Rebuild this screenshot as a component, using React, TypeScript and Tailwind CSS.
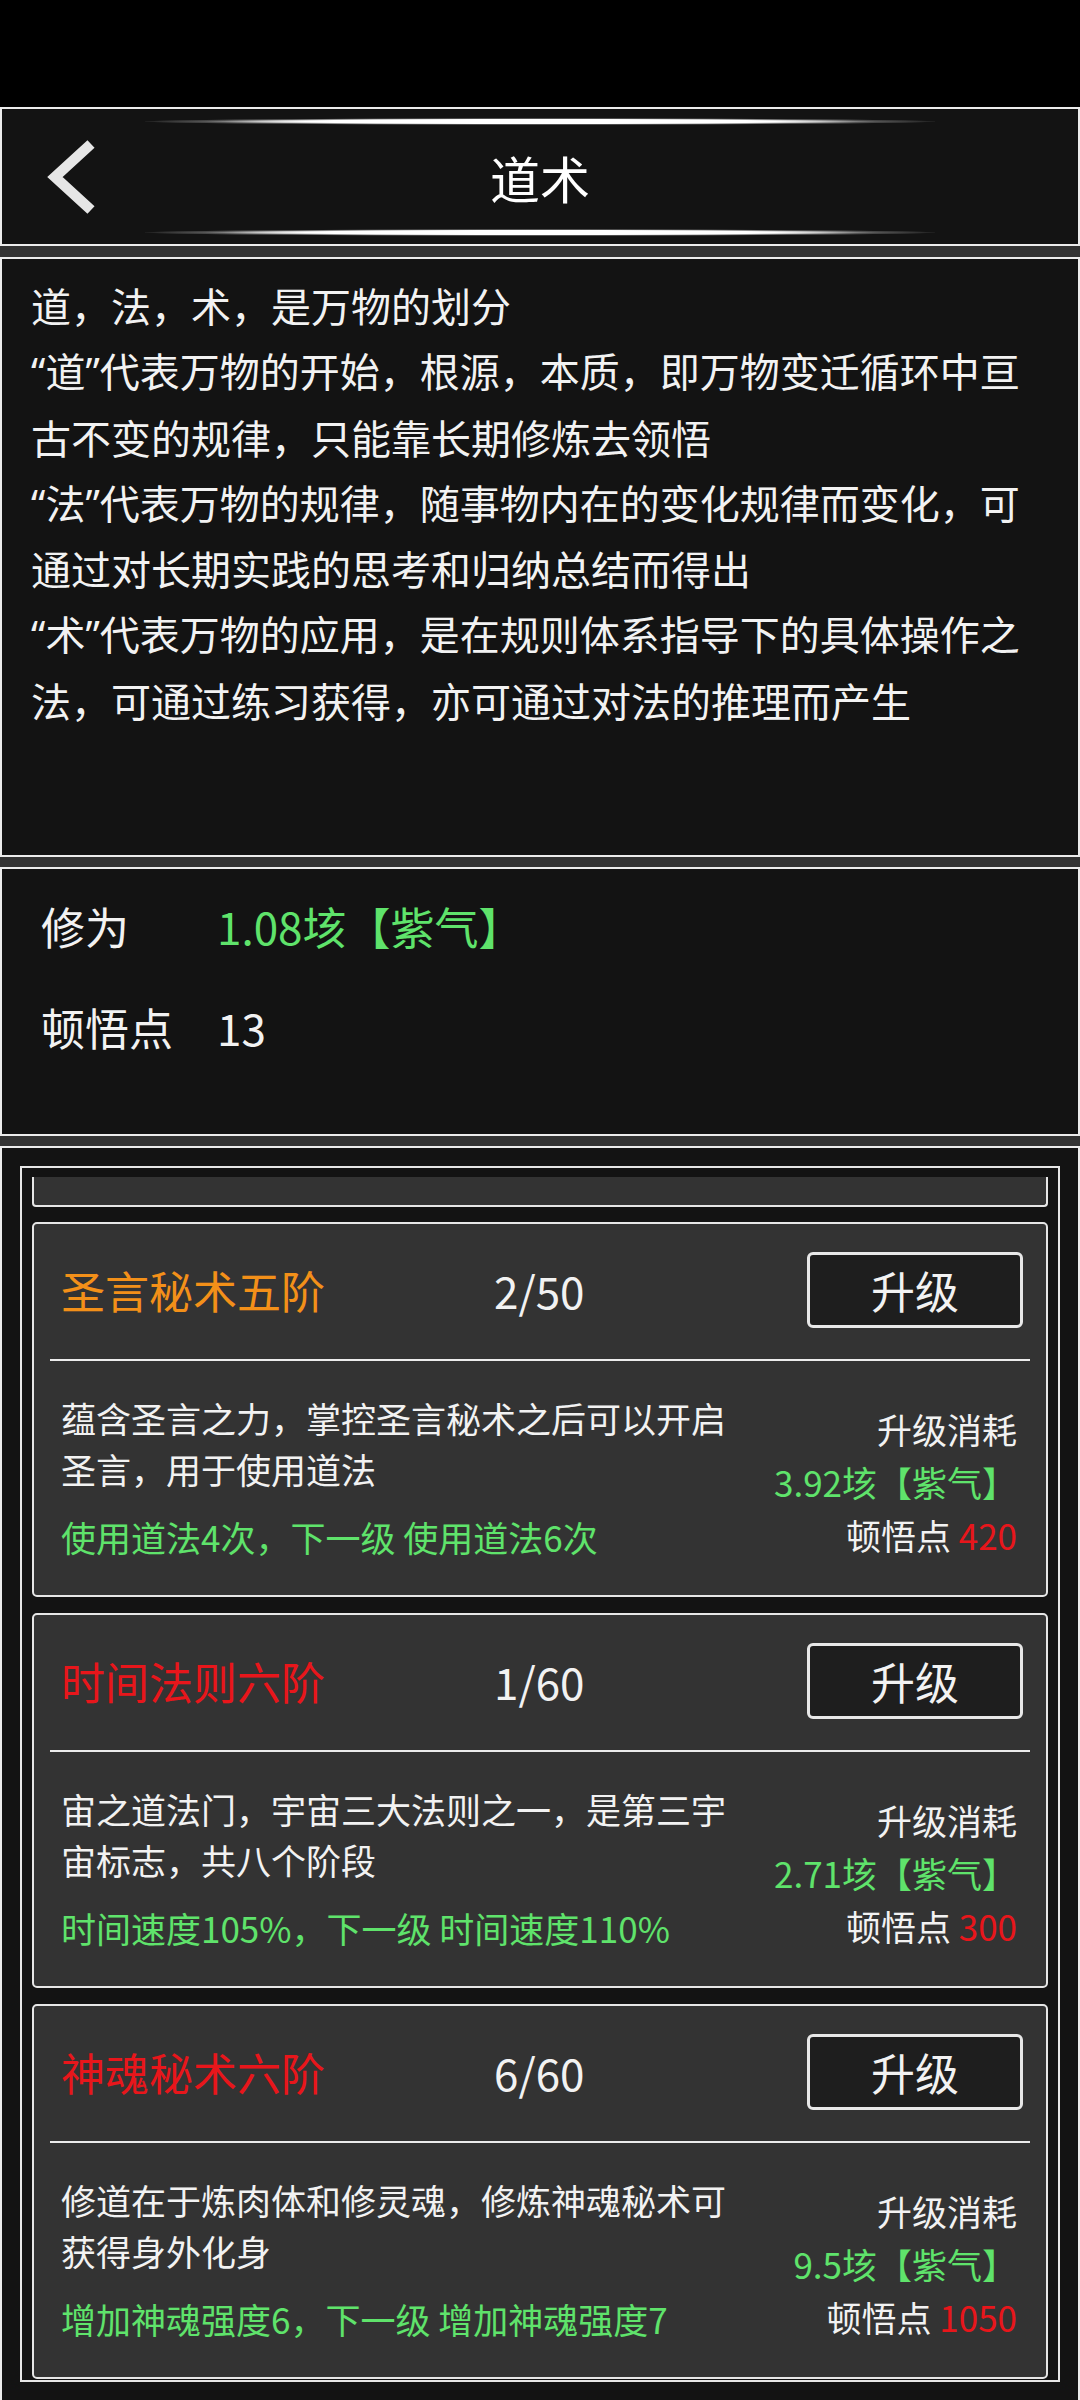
import React from "react";

const Q = ({ c }: { c: string }) => (
  <span className="font-['Noto_Sans',sans-serif]">{c}</span>
);

function Chevron() {
  return (
    <svg width="60" height="84" viewBox="0 0 60 84" className="ml-[40px] block">
      <polyline
        points="49,9 13,42 49,75"
        fill="none"
        stroke="#e6e6e6"
        strokeWidth="10.5"
        strokeLinecap="butt"
        strokeLinejoin="miter"
      />
    </svg>
  );
}

function GlowLine() {
  return (
    <div className="mx-auto w-[790px] h-[7px] bg-[radial-gradient(ellipse_at_center,#ffffff_0%,#ffffff_42%,rgba(220,220,220,0.9)_50%,rgba(120,120,120,0.65)_60%,rgba(80,80,80,0.45)_68%,transparent_72%)]" />
  );
}

function Header() {
  return (
    <div className="h-[139px] border-2 border-[#ececec] bg-[#131313] flex flex-col pt-[9px]">
      <GlowLine />
      <div className="h-[104px] grid grid-cols-[1fr_auto_1fr] items-center">
        <div className="flex items-center">
          <Chevron />
        </div>
        <div className="text-[50px] leading-none text-white">道术</div>
        <div />
      </div>
      <GlowLine />
    </div>
  );
}

function Intro() {
  return (
    <div className="h-[600px] border-2 border-[#ececec] bg-[#131313] pl-[29px] pt-[14px]">
      <div className="text-[40px] leading-[65.3px] text-[#f2f2f2] whitespace-nowrap">
        <div>道，法，术，是万物的划分</div>
        <div>
          <Q c="“" />道<Q c="”" />代表万物的开始，根源，本质，即万物变迁循环中亘
        </div>
        <div>古不变的规律，只能靠长期修炼去领悟</div>
        <div>
          <Q c="“" />法<Q c="”" />代表万物的规律，随事物内在的变化规律而变化，可
        </div>
        <div>通过对长期实践的思考和归纳总结而得出</div>
        <div>
          <Q c="“" />术<Q c="”" />代表万物的应用，是在规则体系指导下的具体操作之
        </div>
        <div>法，可通过练习获得，亦可通过对法的推理而产生</div>
      </div>
    </div>
  );
}

function Stats() {
  return (
    <div className="h-[269px] border-2 border-[#ececec] bg-[#131313] pt-[27px] pl-[39px] flex flex-col gap-[41px] text-[44px] leading-[60px]">
      <div className="flex">
        <div className="w-[176px] text-[#f2f2f2]">修为</div>
        <div className="text-[#5fe36b]">1.08垓【紫气】</div>
      </div>
      <div className="flex">
        <div className="w-[176px] text-[#f2f2f2]">顿悟点</div>
        <div className="text-[#f2f2f2]">13</div>
      </div>
    </div>
  );
}

type Item = {
  name: string;
  color: string;
  count: string;
  desc: string[];
  effect: string;
  cost: string;
  points: string;
};

const items: Item[] = [
  {
    name: "圣言秘术五阶",
    color: "text-[#f39019]",
    count: "2/50",
    desc: ["蕴含圣言之力，掌控圣言秘术之后可以开启", "圣言，用于使用道法"],
    effect: "使用道法4次，下一级 使用道法6次",
    cost: "3.92垓【紫气】",
    points: "420",
  },
  {
    name: "时间法则六阶",
    color: "text-[#e8161b]",
    count: "1/60",
    desc: ["宙之道法门，宇宙三大法则之一，是第三宇", "宙标志，共八个阶段"],
    effect: "时间速度105%，下一级 时间速度110%",
    cost: "2.71垓【紫气】",
    points: "300",
  },
  {
    name: "神魂秘术六阶",
    color: "text-[#e8161b]",
    count: "6/60",
    desc: ["修道在于炼肉体和修灵魂，修炼神魂秘术可", "获得身外化身"],
    effect: "增加神魂强度6，下一级 增加神魂强度7",
    cost: "9.5垓【紫气】",
    points: "1050",
  },
];

function Card({ it }: { it: Item }) {
  return (
    <div className="h-[375px] shrink-0 border-2 border-[#e6e6e6] rounded-[5px] bg-[#333333] flex flex-col">
      <div className="flex items-center pt-[28px] pl-[27px]">
        <div className={`w-[433px] text-[44px] leading-none ${it.color}`}>{it.name}</div>
        <div className="w-[313px] text-[44px] leading-none text-[#f2f2f2]">{it.count}</div>
        <div className="w-[216px] h-[76px] border-[3px] border-[#e8e8e8] rounded-[6px] bg-[#1e1e1e] flex items-center justify-center text-[44px] leading-none text-[#f2f2f2]">
          升级
        </div>
      </div>
      <div className="mt-[31px] mx-[16px] h-[2px] bg-[#ececec]" />
      <div className="flex justify-between">
        <div className="pl-[27px] pt-[31px] w-[707px]">
          <div className="text-[35px] leading-[51px] text-[#f2f2f2] whitespace-nowrap">
            {it.desc.map((l) => (
              <div key={l}>{l}</div>
            ))}
          </div>
          <div className="mt-[17px] text-[35px] leading-[51px] text-[#5fe36b] whitespace-nowrap">{it.effect}</div>
        </div>
        <div className="pt-[41px] pr-[29px] text-right text-[35px] leading-[53px] shrink-0">
          <div className="text-[#f2f2f2]">升级消耗</div>
          <div className="text-[#5fe36b]">{it.cost}</div>
          <div className="text-[#f2f2f2]">
            顿悟点 <span className="text-[#e8161b]">{it.points}</span>
          </div>
        </div>
      </div>
    </div>
  );
}

function List() {
  return (
    <div className="h-[1254px] border-x-2 border-t-2 border-[#ececec] bg-[#131313] pt-[18px] px-[18px]">
      <div className="h-[1216px] border-2 border-[#e6e6e6] overflow-hidden pt-[9px] px-[10px] flex flex-col">
        <div className="h-[30px] shrink-0 bg-[#333333] border-x-2 border-b-2 border-[#e6e6e6] rounded-b-[4px]" />
        <div className="h-[15px] shrink-0" />
        <div className="flex flex-col gap-[16px]">
          {items.map((it) => (
            <Card key={it.name} it={it} />
          ))}
        </div>
      </div>
    </div>
  );
}

export default function App() {
  return (
    <div className="w-[1080px] h-[2400px] overflow-hidden bg-black font-['Noto_Sans_CJK_SC',sans-serif] text-[#f2f2f2]">
      <div className="h-[107px]" />
      <Header />
      <div className="h-[11px] bg-[#333333]" />
      <Intro />
      <div className="h-[10px] bg-[#333333]" />
      <Stats />
      <div className="h-[10px] bg-[#333333]" />
      <List />
    </div>
  );
}
